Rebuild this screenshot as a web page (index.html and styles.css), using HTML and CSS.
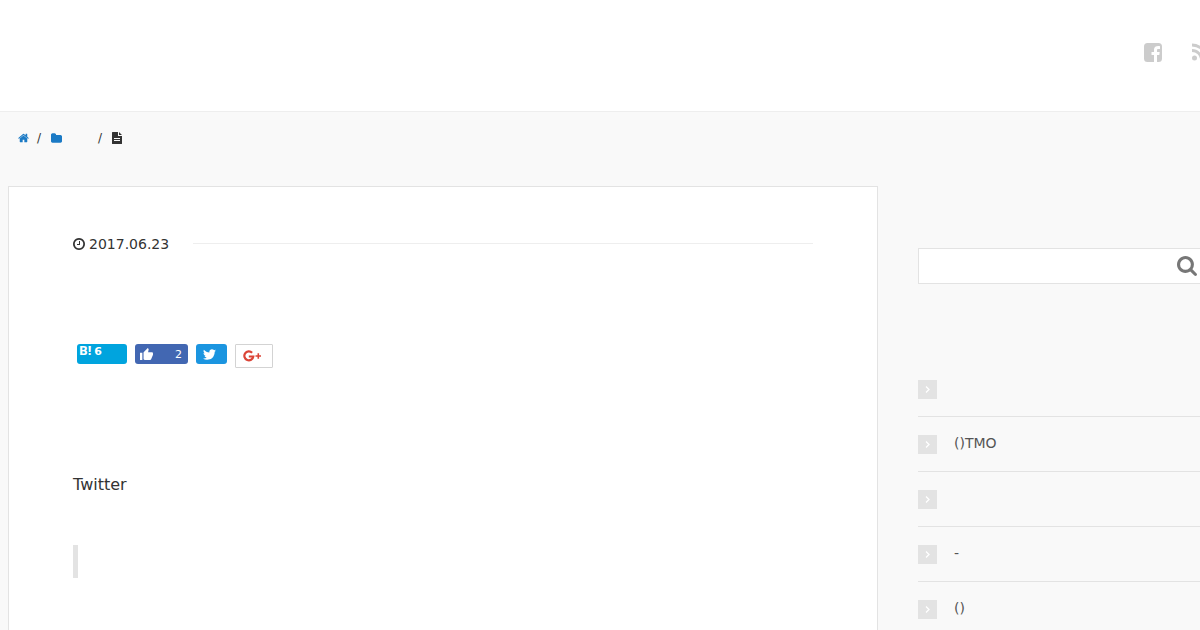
FILE: index.html
```html
<!DOCTYPE html>
<html lang="ja">
<head>
<meta charset="utf-8">
<meta name="viewport" content="width=device-width, initial-scale=1">
<title>2017.06.23</title>
<link rel="stylesheet" href="styles.css">
</head>
<body>
<div class="page">
  <header class="header">
    <nav class="social">
      <a href="#" aria-label="Facebook"><svg class="icon-social" viewBox="0 0 18 19"><path fill-rule="evenodd" d="M3.500 0h11A3.500 3.500 0 0 1 18 3.500v12a3.500 3.500 0 0 1-3.500 3.500H13v-7h2.300l.4-3H13V7.300c0-.9.400-1.300 1.300-1.300H16V3.200C13 2.700 10 3.300 10 6.700V9H7.500v3H10v7H3.500A3.500 3.500 0 0 1 0 15.500v-12A3.500 3.500 0 0 1 3.500 0z"/></svg></a>
      <a href="#" aria-label="RSS"><svg class="icon-social" viewBox="0 0 18 19"><circle cx="2.500" cy="15" r="2.500"/><path d="M0 7.500a9.500 9.500 0 0 1 9.500 9.500M0 2a15 15 0 0 1 15 15" fill="none" stroke="currentColor" stroke-width="2.800"/></svg></a>
    </nav>
  </header>
  <nav class="breadcrumb" aria-label="Breadcrumb">
    <a href="#" aria-label="Home"><svg class="icon-crumb" viewBox="64 128 1664 1536"><path d="M1472 992v480q0 26-19 45t-45 19h-384v-384h-256v384h-384q-26 0-45-19t-19-45v-480q0-1 .5-3t.5-3l575-474 575 474q1 2 1 6zm223-69l-62 74q-8 9-21 11h-3q-13 0-21-7l-692-577-692 577q-12 8-24 7-13-2-21-11l-62-74q-8-10-7-23.500t11-21.500l719-599q32-26 76-26t76 26l244 204v-195q0-14 9-23t23-9h192q14 0 23 9t9 23v408l219 182q10 8 11 21.500t-7 23.500z"/></svg></a>
    <span>/</span>
    <a class="category" href="#" aria-label="Category"><svg class="icon-crumb" viewBox="64 128 1664 1408"><path d="M1728 608v704q0 92-66 158t-158 66h-1216q-92 0-158-66t-66-158v-960q0-92 66-158t158-66h320q92 0 158 66t66 158v32h672q92 0 158 66t66 158z"/></svg></a>
    <span>/</span>
    <svg class="icon-file" viewBox="0 0 10 12"><path fill-rule="evenodd" d="M.6 0H6v4h4v7.400a.6.600 0 0 1-.6.600H.6a.6.600 0 0 1-.6-.6V.6A.6.600 0 0 1 .6 0zM7 0l3 3H7zM2 6v1h6V6zM2 8v1h6V8z"/></svg>
  </nav>
  <div class="content">
    <main class="article">
      <div class="meta">
        <svg class="icon-clock" viewBox="128 128 1536 1536"><path d="M1024 544v448q0 14-9 23t-23 9h-320q-14 0-23-9t-9-23v-64q0-14 9-23t23-9h224v-352q0-14 9-23t23-9h64q14 0 23 9t9 23zm416 352q0-148-73-273t-198-198-273-73-273 73-198 198-73 273 73 273 198 198 273 73 273-73 198-198 73-273zm224 0q0 209-103 385.500t-279.500 279.500-385.500 103-385.500-103-279.500-279.500-103-385.500 103-385.500 279.500-279.500 385.500-103 385.500 103 279.500 279.500 103 385.500z"/></svg>
        <time datetime="2017-06-23">2017.06.23</time>
      </div>
      <div class="share">
        <a class="share-button hatena" href="#"><b class="hatena-mark">B!</b><b class="hatena-count">6</b></a>
        <a class="share-button facebook" href="#" aria-label="Like 2"><svg class="icon-like" viewBox="1 1 22 20"><path d="M1 21h4V9H1v12zm22-11c0-1.100-.9-2-2-2h-6.310l.95-4.570.03-.32c0-.41-.17-.79-.44-1.060L14.170 1 7.590 7.590C7.220 7.950 7 8.450 7 9v10c0 1.100.9 2 2 2h9c.83 0 1.540-.5 1.840-1.220l3.020-7.050c.09-.23.14-.47.14-.73v-2z"/></svg><span>2</span></a>
        <a class="share-button twitter" href="#" aria-label="Tweet"><svg class="icon-bird" viewBox="108 256 1576 1280"><path d="M1684 408q-67 98-162 167 1 14 1 42 0 130-38 259.500t-115.500 248.500-184.500 210.500-258 146-323 54.500q-271 0-496-145 35 4 78 4 225 0 401-138-105-2-188-64.500t-114-159.500q33 5 61 5 43 0 85-11-112-23-185.500-111.500t-73.500-205.500v-4q68 38 146 41-66-44-105-115t-39-154q0-88 44-163 121 149 294.500 238.500t371.500 99.500q-8-38-8-74 0-134 94.500-228.500t228.500-94.500q140 0 236 102 109-21 205-78-37 115-142 178 93-10 186-50z"/></svg></a>
        <a class="share-button google" href="#" aria-label="Google Plus"><svg class="icon-google" viewBox="0 0 19 12"><path d="M9.100 2.700A4.500 4.500 0 1 0 10.300 6.500H5.800" fill="none" stroke="currentColor" stroke-width="2.200"/><path d="M12.500 6h5.500M15.300 3.300v5.400" fill="none" stroke="currentColor" stroke-width="1.600"/></svg></a>
      </div>
      <p class="lead">Twitter</p>
      <blockquote class="quote"></blockquote>
    </main>
    <aside class="sidebar">
      <form class="search">
        <input class="search-input" type="text" aria-label="Search">
        <button class="search-button" type="button" aria-label="Search"><svg class="icon-search" viewBox="64 128 1664 1664"><path d="M1216 832q0-185-131.500-316.500t-316.500-131.500-316.500 131.500-131.500 316.500 131.500 316.500 316.500 131.500 316.500-131.500 131.500-316.500zm512 832q0 52-38 90t-90 38q-54 0-90-38l-343-342q-179 124-399 124-143 0-273.500-55.500t-225-150-150-225-55.500-273.500 55.500-273.500 150-225 225-150 273.500-55.500 273.500 55.500 225 150 150 225 55.500 273.500q0 220-124 399l343 343q37 37 37 90z"/></svg></button>
      </form>
      <ul class="recent">
        <li><svg class="marker" viewBox="0 0 19 19"><path d="M8 6.500l3 3-3 3"/></svg><a href="#" aria-label="Post"></a></li>
        <li><svg class="marker" viewBox="0 0 19 19"><path d="M8 6.500l3 3-3 3"/></svg><a href="#">()TMO</a></li>
        <li><svg class="marker" viewBox="0 0 19 19"><path d="M8 6.500l3 3-3 3"/></svg><a href="#" aria-label="Post"></a></li>
        <li><svg class="marker" viewBox="0 0 19 19"><path d="M8 6.500l3 3-3 3"/></svg><a href="#">-</a></li>
        <li><svg class="marker" viewBox="0 0 19 19"><path d="M8 6.500l3 3-3 3"/></svg><a href="#">()</a></li>
      </ul>
    </aside>
  </div>
</div>
</body>
</html>
```
FILE: styles.css
```css
* {
  box-sizing: border-box;
}

body {
  margin: 0;
  background: #f9f9f9;
  color: #333;
  font-family: "DejaVu Sans", sans-serif;
  font-size: 14px;
}

a {
  color: inherit;
  text-decoration: none;
}

svg {
  display: block;
  flex: none;
  fill: currentColor;
}

.page {
  display: flex;
  flex-direction: column;
  min-height: 100vh;
  overflow: hidden;
}

.header {
  display: flex;
  justify-content: flex-end;
  padding: 43px 0 49px;
  background: #fff;
  border-bottom: 1px solid #eee;
}

.social {
  display: flex;
  gap: 30px;
  margin-right: -10px;
  color: #ccc;
}

.icon-social {
  width: 18px;
  height: 19px;
}

.breadcrumb {
  display: flex;
  align-items: center;
  gap: 8px;
  height: 52px;
  padding-left: 18px;
  font-size: 12px;
}

.breadcrumb a {
  color: #1b7ac5;
}

.breadcrumb .category {
  width: 39px;
  margin-left: 2px;
}

.icon-crumb {
  width: 11px;
  height: 10px;
}

.icon-file {
  width: 10px;
  height: 12px;
  margin-left: 2px;
}

.content {
  display: flex;
  flex: 1;
  gap: 40px;
  padding: 22px 0 0 8px;
}

.article {
  flex: 1;
  padding: 48px 64px 52px;
  background: #fff;
  border: 1px solid #e3e3e3;
  border-bottom: 0;
}

.meta {
  display: flex;
  align-items: center;
  gap: 4px;
  line-height: 18px;
}

.meta::after {
  content: "";
  flex: 1;
  height: 1px;
  margin: 0 0 1px 20px;
  background: #eee;
}

.icon-clock {
  width: 12px;
  height: 12px;
}

.share {
  display: flex;
  align-items: flex-start;
  gap: 8px;
  margin: 91px 4px 0;
}

.share-button {
  display: flex;
  align-items: center;
  height: 20px;
  border-radius: 3px;
  color: #fff;
  font-size: 11px;
}

.hatena {
  align-items: flex-start;
  gap: 3px;
  width: 50px;
  padding-left: 2px;
  background: #00a4de;
}

.hatena-mark {
  font-family: "Noto Sans", sans-serif;
  font-size: 13px;
  line-height: 12px;
}

.hatena-count {
  line-height: 16px;
}

.facebook {
  justify-content: space-between;
  width: 53px;
  padding: 0 6px 0 5px;
  background: #4267b2;
}

.twitter {
  width: 31px;
  padding-left: 7px;
  background: #1b95e0;
}

.google {
  width: 38px;
  height: 24px;
  padding-left: 7px;
  background: #fff;
  border: 1px solid #d3d3d3;
  border-radius: 1px;
  color: #db4437;
}

.icon-like {
  width: 13px;
  height: 12px;
}

.icon-bird {
  width: 13px;
  height: 11px;
}

.icon-google {
  width: 19px;
  height: 12px;
}

.lead {
  margin: 103px 0 0;
  font-size: 16px;
  line-height: 28px;
}

.quote {
  height: 33px;
  margin: 46px 0 0;
  border-left: 5px solid #e3e3e3;
}

.sidebar {
  flex: 0 0 300px;
  margin-right: -18px;
  padding-top: 62px;
}

.search {
  display: flex;
  height: 36px;
  background: #fff;
  border: 1px solid #e3e3e3;
}

.search-input {
  flex: 1;
  min-width: 0;
  padding: 0 8px;
  border: 0;
  background: transparent;
  font: inherit;
}

.search-button {
  width: 40px;
  padding: 0;
  border: 0;
  background: transparent;
  color: #777;
}

.icon-search {
  width: 20px;
  height: 20px;
}

.recent {
  margin: 78px 0 0;
  padding: 0;
  list-style: none;
}

.recent li {
  display: flex;
  gap: 17px;
  padding: 15px 0 17px;
  border-bottom: 1px solid #e3e3e3;
  color: #555;
  line-height: 22px;
}

.marker {
  width: 19px;
  height: 19px;
  margin-top: 3px;
  background: #e3e3e3;
}

.marker path {
  fill: none;
  stroke: #fff;
  stroke-width: 1.300;
}
```
